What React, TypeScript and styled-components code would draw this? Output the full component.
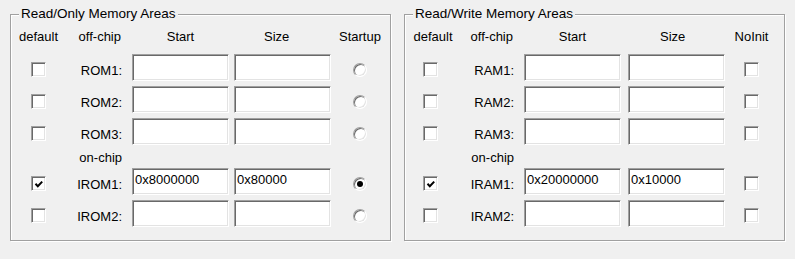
import React from 'react';
import styled, { createGlobalStyle } from 'styled-components';

type Area = {
  name: string;
  isDefault?: boolean;
  start?: string;
  size?: string;
  marked?: boolean;
};

type Layout = {
  cols: string;
  labelEnd: number;
  defaultPad: number;
  sizeIndent: number;
};

type GroupProps = {
  title: string;
  lastHeader: string;
  lastKind: 'radio' | 'check';
  offChip: Area[];
  onChip: Area[];
  layout: Layout;
};

const GlobalStyle = createGlobalStyle`
  html, body {
    margin: 0;
    padding: 0;
    background: #f0f0f0;
  }
  body {
    font-family: 'Liberation Sans', Arial, sans-serif;
    font-size: 13px;
    color: #000;
  }
`;

const Page = styled.div`
  display: flex;
  gap: 13px;
  padding: 6px 0 0 10px;
  height: 259px;
  box-sizing: border-box;
`;

const Group = styled.fieldset`
  box-sizing: border-box;
  width: 381px;
  min-width: 0;
  margin: 0;
  padding: 0 0 13px;
  border: 1px solid #a0a0a0;
  box-shadow: 1px 1px 0 #fff, inset 1px 1px 0 #fff;
  align-self: flex-start;
`;

const Caption = styled.legend`
  margin-left: 8px;
  padding: 0 2px;
  font-size: 13.5px;
  line-height: 16px;
  background: #f0f0f0;
`;

const Grid = styled.div<{ $cols: string }>`
  display: grid;
  grid-template-columns: ${(p) => p.$cols};
  grid-template-rows: 20px repeat(3, 27px) 13px repeat(2, 27px);
  row-gap: 5px;
  margin-top: 7px;
  line-height: 16px;
`;

const Head = styled.div<{ $align: 'left' | 'center' | 'right'; $pad?: string }>`
  align-self: start;
  text-align: ${(p) => p.$align};
  padding: ${(p) => p.$pad ?? '0'};
  white-space: nowrap;
`;

const SubHead = styled.div<{ $width: number }>`
  grid-column: 1 / -1;
  align-self: start;
  width: ${(p) => p.$width}px;
  text-align: right;
`;

const RowLabel = styled.div`
  align-self: end;
  text-align: right;
  padding: 0 10px 2px 0;
`;

const ControlCell = styled.div`
  display: flex;
  justify-content: center;
  align-items: flex-end;
  padding-bottom: 4px;
`;

const SizeCell = styled.div`
  display: flex;
  justify-content: flex-end;
`;

const AddrInput = styled.input`
  box-sizing: border-box;
  width: 97px;
  height: 27px;
  margin: 0;
  padding: 0 2px 5px 2px;
  border: 1px solid;
  border-color: #a0a0a0 #fff #fff #a0a0a0;
  box-shadow: inset 1px 1px 0 #696969, inset -1px -1px 0 #e3e3e3;
  background: #fff;
  font-family: 'Liberation Sans', Arial, sans-serif;
  font-size: 13px;
  color: #000;
  outline: none;
`;

const CheckBox = styled.span`
  box-sizing: border-box;
  display: block;
  width: 15px;
  height: 15px;
  border: 1px solid;
  border-color: #a0a0a0 #fff #fff #a0a0a0;
  box-shadow: inset 1px 1px 0 #696969, inset -1px -1px 0 #e3e3e3;
  background: #fff;
`;

const Radio = styled.span`
  box-sizing: border-box;
  display: flex;
  align-items: center;
  justify-content: center;
  width: 14px;
  height: 14px;
  border-radius: 50%;
  border: 1px solid;
  border-color: #a0a0a0 #fff #fff #a0a0a0;
  box-shadow: inset 1px 1px 0 #696969, inset -1px -1px 0 #e3e3e3;
  background: #fff;
`;

const Dot = styled.span`
  display: block;
  width: 6px;
  height: 6px;
  border-radius: 50%;
  background: #000;
`;

const Check = ({ on }: { on?: boolean }) => (
  <CheckBox>
    {on && (
      <svg width="13" height="13" viewBox="0 0 13 13">
        <path d="M3.5 6.8 L5.8 9.2 L10.2 4.6" fill="none" stroke="#000" strokeWidth="2" />
      </svg>
    )}
  </CheckBox>
);

const AreaRow = ({ area, lastKind }: { area: Area; lastKind: 'radio' | 'check' }) => (
  <>
    <ControlCell>
      <Check on={area.isDefault} />
    </ControlCell>
    <RowLabel>{area.name}:</RowLabel>
    <AddrInput defaultValue={area.start ?? ''} />
    <SizeCell>
      <AddrInput defaultValue={area.size ?? ''} />
    </SizeCell>
    <ControlCell>
      {lastKind === 'radio' ? <Radio>{area.marked && <Dot />}</Radio> : <Check on={area.marked} />}
    </ControlCell>
  </>
);

const MemoryGroup = ({ title, lastHeader, lastKind, offChip, onChip, layout }: GroupProps) => (
  <Group>
    <Caption>{title}</Caption>
    <Grid $cols={layout.cols}>
      <Head $align="center" $pad={`0 0 0 ${layout.defaultPad}px`}>default</Head>
      <Head $align="right" $pad="0 11px 0 0">off-chip</Head>
      <Head $align="center">Start</Head>
      <Head $align="left" $pad={`0 0 0 ${layout.sizeIndent}px`}>Size</Head>
      <Head $align="center">{lastHeader}</Head>
      {offChip.map((a) => (
        <AreaRow key={a.name} area={a} lastKind={lastKind} />
      ))}
      <SubHead $width={layout.labelEnd}>on-chip</SubHead>
      {onChip.map((a) => (
        <AreaRow key={a.name} area={a} lastKind={lastKind} />
      ))}
    </Grid>
  </Group>
);

const App = () => (
  <>
    <GlobalStyle />
    <Page>
      <MemoryGroup
        title="Read/Only Memory Areas"
        lastHeader="Startup"
        lastKind="radio"
        layout={{ cols: '55px 66px 97px 102px 58px', labelEnd: 111, defaultPad: 0, sizeIndent: 35 }}
        offChip={[{ name: 'ROM1' }, { name: 'ROM2' }, { name: 'ROM3' }]}
        onChip={[
          { name: 'IROM1', isDefault: true, start: '0x8000000', size: '0x80000', marked: true },
          { name: 'IROM2' },
        ]}
      />
      <MemoryGroup
        title="Read/Write Memory Areas"
        lastHeader="NoInit"
        lastKind="check"
        layout={{ cols: '51px 68px 97px 104px 53px', labelEnd: 109, defaultPad: 5, sizeIndent: 39 }}
        offChip={[{ name: 'RAM1' }, { name: 'RAM2' }, { name: 'RAM3' }]}
        onChip={[
          { name: 'IRAM1', isDefault: true, start: '0x20000000', size: '0x10000' },
          { name: 'IRAM2' },
        ]}
      />
    </Page>
  </>
);

export default App;
